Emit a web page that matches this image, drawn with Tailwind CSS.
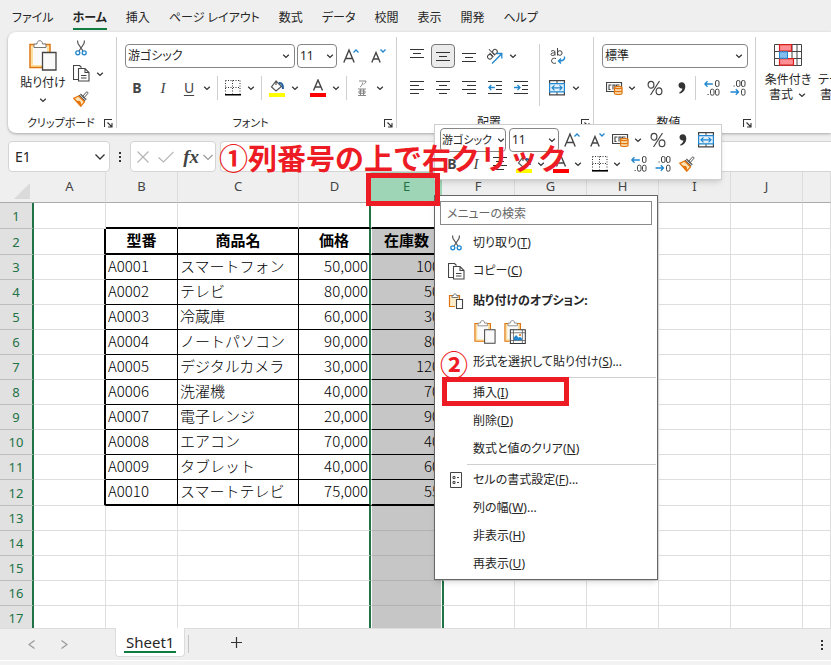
<!DOCTYPE html>
<html lang="ja">
<head>
  <meta charset="UTF-8" />
  <meta name="viewport" content="width=device-width, initial-scale=1.0"/>
  <title>Sheet1 - 列の挿入</title>
  <script src="https://cdn.jsdelivr.net/npm/@tailwindcss/browser@4"></script>
</head>
<body class="relative h-screen overflow-hidden flex flex-col bg-[#efefef] text-[#262626] text-[12px] leading-4 font-['Noto_Sans','Noto_Sans_CJK_JP',sans-serif] [font-feature-settings:'palt']">

  <!-- Icons -->
  <svg class="hidden" fill="none">
    <symbol id="chev" viewBox="0 0 10 10"><path d="M2.2 3.8 5 6.4 7.8 3.8" fill="none" stroke="#333" stroke-width="1.3"/></symbol>
    <symbol id="cut" viewBox="0 0 16 16">
      <path d="M4.5 .5 5 3.5 10 11M11.5 .5 11 3.5 6 11" fill="none" stroke="#555" stroke-width="1.2"/>
      <circle cx="4.8" cy="12.8" r="2" fill="none" stroke="#1f86cf" stroke-width="1.3"/>
      <circle cx="11.2" cy="12.8" r="2" fill="none" stroke="#1f86cf" stroke-width="1.3"/>
    </symbol>
    <symbol id="copy" viewBox="0 0 17 17">
      <path d="M5 14.5H.5V.5h6l2 2" fill="none" stroke="#444" stroke-width="1.1"/>
      <path d="M5.500 3.500h6.500l4 4v8.500H5.500zM12 3.500v4h4M8 10.500h5.500M8 13h5.500" fill="#fff" stroke="#444" stroke-width="1.1"/>
    </symbol>
    <symbol id="brush" viewBox="0 0 16 16">
      <path d="M9.5 5.5 13.2 1.2c1-.9 2.300.4 1.500 1.400L11 6.800z" fill="#fff" stroke="#555"/>
      <path d="M6 4.200 12 10.200M7.400 3 13.300 8.800" fill="none" stroke="#555" stroke-width="1.200"/>
      <path d="M5.500 5 .8 7.300 7.800 15.200 11.500 10.800z" fill="#fbe3b5" stroke="#e8750a" stroke-width="1.300"/>
      <path d="M3.500 10.300 7 10.500 7.800 14.500z" fill="#e8750a" stroke="#e8750a"/>
    </symbol>
    <symbol id="paste" viewBox="0 0 28 31">
      <path d="M1.500 4.500h19v23h-19z" fill="#fbe0a0"/>
      <path d="M4 7h14v18H4z" fill="#fafafa"/>
      <path d="M6 4.500H1V27.500H13M15 4.500h6V12" fill="none" stroke="#e0750f" stroke-width="1.500"/>
      <path d="M5 7.500V4h3C8 1.500 9.500.7 10.800.7S13.500 1.500 13.500 4h3.500v3.500z" fill="#fff" stroke="#777"/>
      <path d="M13.500 12.500h13.500v17.500H13.500z" fill="#fafafa" stroke="#444" stroke-width="1.300"/>
    </symbol>
    <symbol id="paste-sm" viewBox="0 0 16 16">
      <path d="M1.500 2.500h10v11h-10z" fill="#fdeecb"/>
      <path d="M4 2.500H1.500v11H7M9 2.500h2.500V6" fill="none" stroke="#e0750f" stroke-width="1.200"/>
      <path d="M4 4.500v-2h1.500c0-2.200 3-2.200 3 0H10v2z" fill="#fff" stroke="#777"/>
      <path d="M8.500 6.500h6v9h-6z" fill="#fff" stroke="#444" stroke-width="1.100"/>
    </symbol>
    <symbol id="pastepic" viewBox="0 0 28 31">
      <path d="M1.500 4.500h19v23h-19z" fill="#fbe0a0"/>
      <path d="M4 7h14v18H4z" fill="#fafafa"/>
      <path d="M6 4.500H1V27.500H7M15 4.500h6V12" fill="none" stroke="#e0750f" stroke-width="1.500"/>
      <path d="M5 7.500V4h3C8 1.500 9.500.7 10.800.7S13.500 1.500 13.500 4h3.500v3.500z" fill="#fff" stroke="#777"/>
      <path d="M8 12.500h19.300v17.800H8z" fill="#fff" stroke="#333" stroke-width="1.300"/>
      <path d="M8 16.500h19M8 26.500h19M12 12.500v18M23.500 12.500v18" stroke="#555" fill="none"/>
      <path d="M12.500 26v-3.500l3-3 3 3.500 2-1.500 2.500 2.500v2z" fill="#1f86cf"/><circle cx="20.500" cy="19.500" r="1.300" fill="#e0750f"/>
    </symbol>
    <symbol id="borders" viewBox="0 0 16 16">
      <path d="M.5 .5h15M.5 7.500h15M.5 .5v13M7.500 .5v13M15 .5v13" fill="none" stroke="#333" stroke-dasharray="1 1.500"/>
      <path d="M0 14.800h16" stroke="#000" stroke-width="1.600"/>
    </symbol>
    <symbol id="fill" viewBox="0 0 16 18">
      <path d="M7 2 2.500 8 7 12 12.500 7.500zM7 2v4" fill="#fff" stroke="#555" stroke-width="1.200"/>
      <path d="M10 4c3-.5 4 2 4 6" fill="none" stroke="#1f5f9f" stroke-width="2"/>
      <path d="M0 14h16v4H0z" fill="#ff0"/>
    </symbol>
    <symbol id="fontcolor" viewBox="0 0 16 18">
      <path d="M3.500 11.500 8 1l4.500 10.500M5 8h6" fill="none" stroke="#444" stroke-width="1.400"/>
      <path d="M0 14h16v4H0z" fill="#f00"/>
    </symbol>
    <symbol id="bigger" viewBox="0 0 16 16">
      <path d="M.8 14.500 6 2l5.200 12.500M2.600 10.500h6.800" fill="none" stroke="#444" stroke-width="1.400"/>
      <path d="M10.500 4.500 13 2l2.500 2.500" fill="none" stroke="#1f86cf" stroke-width="1.300"/>
    </symbol>
    <symbol id="smaller" viewBox="0 0 16 16">
      <path d="M1.800 14.500 6 4.500l4.200 10M3.300 11h5.400" fill="none" stroke="#444" stroke-width="1.400"/>
      <path d="M10.500 1.500 13 4l2.500-2.500" fill="none" stroke="#1f86cf" stroke-width="1.300"/>
    </symbol>
    <symbol id="lines-center" viewBox="0 0 14 14"><path d="M0 .5h14M3 4.500h8M0 8.500h14M3 12.500h8" stroke="#333"/></symbol>
    <symbol id="merge" viewBox="0 0 16 16">
      <path d="M.6 .6h14.800v14.300H.6z" fill="#fff" stroke="#444" stroke-width="1.200"/>
      <path d="M8 .5v3M8 12v3" stroke="#444"/>
      <path d="M.6 3.600h14.800v8.300H.6z" fill="#e4f1fb" stroke="#1f86cf" stroke-width="1.200"/>
      <path d="M3 7.800h10M5.500 5.300 3 7.800l2.500 2.500M10.500 5.300 13 7.800l-2.500 2.500" fill="none" stroke="#1f86cf" stroke-width="1.200"/>
    </symbol>
    <symbol id="money" viewBox="0 0 17 14">
      <path d="M.5 1.500h15v9H.5z" fill="#fff" stroke="#444" stroke-width="1.200"/>
      <path d="M5.500 4H3v4.500h1.500M7 8.500V4h2v4M10.500 6V4h3" fill="none" stroke="#444" stroke-width="1.100"/>
      <path d="M8.500 6.500c0-1.500 7.500-1.500 7.500 0v6c0 1.300-7.500 1.300-7.500 0z" fill="#fbd9a8" stroke="#e0750f" stroke-width="1.200"/>
      <path d="M8.500 6.800c1 1.200 6.500 1.200 7.500 0M8.500 9.800c1 1.200 6.500 1.200 7.500 0" fill="none" stroke="#e0750f" stroke-width="1.200"/>
    </symbol>
    <symbol id="percent" viewBox="0 0 16 16">
      <path d="M12.500 1 3.500 15" stroke="#444" stroke-width="1.200"/>
      <ellipse cx="4" cy="4.700" rx="2.900" ry="3.400" fill="none" stroke="#444" stroke-width="1.200"/>
      <ellipse cx="12" cy="11.300" rx="2.900" ry="3.400" fill="none" stroke="#444" stroke-width="1.200"/>
    </symbol>
    <symbol id="comma" viewBox="0 0 10 14"><path d="M1.500 4.300C1.500 2.200 3 1.200 4.800 1.200c2.200 0 3.500 1.800 3.500 4.300 0 3.700-2.600 6.300-5.600 7.200l-.5-1.200c1.800-.8 3-2.200 3.200-4C3.500 8 1.500 6.500 1.500 4.300z" fill="#333"/></symbol>
    <symbol id="inc" viewBox="0 0 16 16">
      <path d="M.8 4h8M3.500 1.300.8 4l2.700 2.700" fill="none" stroke="#1f86cf" stroke-width="1.300"/>
      <path d="M3.500 14.500h1.200" stroke="#444" stroke-width="1.200"/>
      <rect x="11.500" y=".5" width="3.500" height="6" rx="1.500" fill="none" stroke="#444"/>
      <rect x="6.500" y="9.200" width="3.500" height="6" rx="1.500" fill="none" stroke="#444"/>
      <rect x="11.500" y="9.200" width="3.500" height="6" rx="1.500" fill="none" stroke="#444"/>
    </symbol>
    <symbol id="dec" viewBox="0 0 16 16">
      <path d="M.5 12h8M5.800 9.300 8.500 12l-2.700 2.700" fill="none" stroke="#1f86cf" stroke-width="1.300"/>
      <path d="M3.500 6h1.200" stroke="#444" stroke-width="1.200"/>
      <rect x="6.500" y=".5" width="3.500" height="6" rx="1.500" fill="none" stroke="#444"/>
      <rect x="11.500" y=".5" width="3.500" height="6" rx="1.500" fill="none" stroke="#444"/>
      <rect x="11.500" y="9.200" width="3.500" height="6" rx="1.500" fill="none" stroke="#444"/>
    </symbol>
    <symbol id="launch" viewBox="0 0 9 9"><path d="M.5 8V.5H8M3.500 3.500l4 4M8 4v4H4" fill="none" stroke="#333" stroke-width="1.100"/></symbol>
    <symbol id="dots" viewBox="0 0 4 12"><path d="M1 1h2v2H1zM1 5h2v2H1zM1 9h2v2H1z" fill="#333"/></symbol>
  </svg>

  <!-- Ribbon tabs -->
  <nav class="h-8 shrink-0 flex items-center gap-[19px] pl-3 pt-1 whitespace-nowrap">
    <a href="#">ファイル</a>
    <a href="#" class="relative font-bold">ホーム<span class="absolute inset-x-0 -bottom-1 h-0.5 bg-[#107c41]"></span></a>
    <a href="#">挿入</a>
    <a href="#">ページ レイアウト</a>
    <a href="#">数式</a>
    <a href="#">データ</a>
    <a href="#">校閲</a>
    <a href="#">表示</a>
    <a href="#">開発</a>
    <a href="#">ヘルプ</a>
  </nav>

  <!-- Ribbon -->
  <div class="ml-2 h-[101px] shrink-0 flex bg-white rounded-l-lg shadow-[0_1px_3px_rgba(0,0,0,0.3)] overflow-hidden whitespace-nowrap">

    <section class="w-[108px] shrink-0 flex flex-col pt-2">
      <div class="flex pl-3">
        <button class="w-[46px] flex flex-col items-center gap-1">
          <svg class="w-7 h-[31px]"><use href="#paste"/></svg>
          <span>貼り付け</span>
          <svg class="w-[10px] h-[10px]"><use href="#chev"/></svg>
        </button>
        <div class="ml-[7px] flex flex-col gap-[9px]">
          <button aria-label="切り取り" class="w-4"><svg class="size-4"><use href="#cut"/></svg></button>
          <button aria-label="コピー" class="flex items-center gap-[5px]"><svg class="size-[17px]"><use href="#copy"/></svg><svg class="w-[10px] h-[10px]"><use href="#chev"/></svg></button>
          <button aria-label="書式のコピー" class="w-4"><svg class="size-4"><use href="#brush"/></svg></button>
        </div>
      </div>
      <div class="mt-auto mb-0.5 pr-[3px] flex items-center justify-between"><span class="pl-[19px] text-[11px]">クリップボード</span><button aria-label="クリップボードの詳細"><svg class="size-[9px]"><use href="#launch"/></svg></button></div>
    </section>
    <div class="w-px shrink-0 my-[5px] bg-[#cfcfcf]"></div>

    <section class="w-[279px] shrink-0 flex flex-col gap-2 pt-3">
      <div class="h-6 pl-2 flex items-center">
        <div class="relative">
          <select aria-label="フォント名" class="appearance-none block w-[170px] h-6 px-0.5 border border-[#868686] rounded bg-white"><option>游ゴシック</option></select>
          <svg class="absolute right-1 top-[7px] w-[10px] h-[10px] pointer-events-none"><use href="#chev"/></svg>
        </div>
        <div class="relative ml-0.5">
          <select aria-label="フォント サイズ" class="appearance-none block w-10 h-6 px-0.5 border border-[#868686] rounded bg-white"><option>11</option></select>
          <svg class="absolute right-0.5 top-[7px] w-[10px] h-[10px] pointer-events-none"><use href="#chev"/></svg>
        </div>
        <button aria-label="拡大" class="ml-1.5"><svg class="size-4"><use href="#bigger"/></svg></button>
        <button aria-label="縮小" class="ml-[11px]"><svg class="size-4"><use href="#smaller"/></svg></button>
      </div>
      <div class="h-6 pl-[7px] flex items-center">
        <button class="w-[26px] text-[14px] font-bold text-[#444]">B</button>
        <button class="w-[26px] text-[15px] italic text-[#444] font-['Liberation_Serif',serif]">I</button>
        <button class="w-[26px] text-[14px] underline underline-offset-2 text-[#444]">U</button>
        <svg class="w-[10px] h-[10px]"><use href="#chev"/></svg>
        <div class="w-px h-6 mx-[5px] bg-[#cfcfcf]"></div>
        <button aria-label="罫線" class="flex items-center gap-[3px]"><svg class="w-5 h-4"><use href="#borders"/></svg><svg class="w-[10px] h-[10px]"><use href="#chev"/></svg></button>
        <div class="w-px h-6 mx-[5px] bg-[#cfcfcf]"></div>
        <button aria-label="塗りつぶしの色" class="flex items-center gap-[3px]"><svg class="w-5 h-[18px]"><use href="#fill"/></svg><svg class="w-[10px] h-[10px]"><use href="#chev"/></svg></button>
        <button aria-label="フォントの色" class="ml-2 flex items-center gap-[3px]"><svg class="w-5 h-[18px]"><use href="#fontcolor"/></svg><svg class="w-[10px] h-[10px]"><use href="#chev"/></svg></button>
        <div class="w-px h-6 mx-[5px] bg-[#cfcfcf]"></div>
        <button aria-label="ふりがな" class="flex items-center gap-[3px]"><svg class="w-5 h-[18px]" viewBox="0 0 20 18"><path d="M7 2h7c0 1.500-1 2.500-2.500 3.200M10.500 3.500c0 2-.8 3.500-2.500 4.500M6 10h8M6 16.500h8M8.500 10v6M11.500 10v6M7 12h6v2.300H7z" fill="none" stroke="#888"/></svg><svg class="w-[10px] h-[10px]"><use href="#chev"/></svg></button>
      </div>
      <div class="mt-auto mb-0.5 pr-[3px] flex items-center"><span class="flex-1 text-center text-[11px]">フォント</span><button aria-label="フォントの詳細"><svg class="size-[9px]"><use href="#launch"/></svg></button></div>
    </section>
    <div class="w-px shrink-0 my-[5px] bg-[#cfcfcf]"></div>

    <section class="w-[196px] shrink-0 flex flex-col pt-3">
      <div class="flex pl-[7px]">
        <div class="w-[135px] flex flex-col gap-2">
          <div class="h-6 flex items-center">
            <button aria-label="上揃え" class="w-[26px] flex justify-center"><svg class="size-[14px]"><path d="M0 .5h14M3 4.500h8M0 8.500h14" stroke="#333"/></svg></button>
            <button aria-label="上下中央揃え" class="w-[24px] h-6 mx-px flex justify-center items-center border border-[#777] rounded bg-[#ebebeb]"><svg class="w-[14px] h-[9px]"><path d="M0 .5h14M3 4.500h8M0 8.500h14" stroke="#333"/></svg></button>
            <button aria-label="下揃え" class="w-[26px] flex justify-center"><svg class="size-[14px]"><path d="M0 4.500h14M3 8.500h8M0 12.500h14" stroke="#333"/></svg></button>
            <button aria-label="方向" class="flex items-center gap-1 pl-1">
              <svg class="size-[18px]" viewBox="0 0 18 18">
                <g fill="none" stroke="#444" transform="rotate(-45 6 7)"><circle cx="2.500" cy="7.500" r="2.300"/><path d="M5 4.500v5.500M7.200 1.500V10"/><circle cx="9.700" cy="7.500" r="2.300"/></g>
                <path d="M6 16.500 15.500 7M10.800 6.500h5v5" fill="none" stroke="#1f86cf" stroke-width="1.300"/>
              </svg>
              <svg class="w-[10px] h-[10px]"><use href="#chev"/></svg>
            </button>
          </div>
          <div class="h-6 flex items-center">
            <button aria-label="左揃え" class="w-[26px] flex justify-center"><svg class="size-[14px]"><path d="M0 .5h14M0 4.500h9M0 8.500h14M0 12.500h9" stroke="#333"/></svg></button>
            <button aria-label="中央揃え" class="w-[26px] flex justify-center"><svg class="size-[14px]"><use href="#lines-center"/></svg></button>
            <button aria-label="右揃え" class="w-[26px] flex justify-center"><svg class="size-[14px]"><path d="M0 .5h14M5 4.500h9M0 8.500h14M5 12.500h9" stroke="#333"/></svg></button>
            <button aria-label="インデントを減らす" class="w-[26px] flex justify-center"><svg class="size-[14px]"><path d="M0 .5h14M8 4.500h6M8 8.500h6M0 12.500h14" stroke="#333"/><path d="M.8 6.500h6M3.300 4 .8 6.500 3.300 9" fill="none" stroke="#1f86cf" stroke-width="1.300"/></svg></button>
            <button aria-label="インデントを増やす" class="w-[26px] flex justify-center"><svg class="size-[14px]"><path d="M0 .5h14M8 4.500h6M8 8.500h6M0 12.500h14" stroke="#333"/><path d="M0 6.500h6M3.500 4 6 6.500 3.500 9" fill="none" stroke="#1f86cf" stroke-width="1.300"/></svg></button>
          </div>
        </div>
        <div class="w-px h-[62px] bg-[#cfcfcf]"></div>
        <div class="pl-[9px] flex flex-col gap-2">
          <button aria-label="折り返して全体を表示する" class="h-6 flex items-center">
            <svg class="w-[18px] h-[18px]" viewBox="0 0 18 18">
              <path d="M2 4.300c1-1 4-1.200 4 .7V8.500M6 5.800c-2 0-4 .2-4 1.500 0 1.800 3 1.500 4 0M8.500 1v7.500M7 16c-1.500.9-4.500.3-4.500-2.200S5.500 10.700 7 11.600" fill="none" stroke="#444"/>
              <circle cx="10.800" cy="6" r="2.300" fill="none" stroke="#444"/>
              <path d="M15.500 9.500c.5 3-1 4.500-6 4.500M12 11.500 9.500 14l2.500 2.500" fill="none" stroke="#1f86cf" stroke-width="1.400"/>
            </svg>
          </button>
          <button aria-label="セルを結合して中央揃え" class="h-6 flex items-center gap-1.5"><svg class="size-4"><use href="#merge"/></svg><svg class="w-[10px] h-[10px]"><use href="#chev"/></svg></button>
        </div>
      </div>
      <div class="mt-auto mb-0.5 pr-[3px] flex items-center"><span class="flex-1 text-center">配置</span><button aria-label="配置の詳細"><svg class="size-[9px]"><use href="#launch"/></svg></button></div>
    </section>
    <div class="w-px shrink-0 my-[5px] bg-[#cfcfcf]"></div>

    <section class="w-[161px] shrink-0 flex flex-col gap-2 pt-3">
      <div class="relative ml-2 w-[146px]">
        <select aria-label="表示形式" class="appearance-none block w-full h-6 px-0.5 border border-[#868686] rounded bg-white"><option>標準</option></select>
        <svg class="absolute right-1 top-[7px] w-[10px] h-[10px] pointer-events-none"><use href="#chev"/></svg>
      </div>
      <div class="h-6 pl-3 flex items-center">
        <button aria-label="通貨表示形式" class="flex items-center gap-1"><svg class="w-[17px] h-[14px]"><use href="#money"/></svg><svg class="w-[10px] h-[10px]"><use href="#chev"/></svg></button>
        <button aria-label="パーセント" class="ml-2.5"><svg class="size-4"><use href="#percent"/></svg></button>
        <button aria-label="桁区切り" class="ml-3.5"><svg class="w-[10px] h-[14px]"><use href="#comma"/></svg></button>
        <div class="w-px h-6 mx-2 bg-[#cfcfcf]"></div>
        <button aria-label="小数点以下の桁数を増やす"><svg class="size-4"><use href="#inc"/></svg></button>
        <button aria-label="小数点以下の桁数を減らす" class="ml-2.5"><svg class="size-4"><use href="#dec"/></svg></button>
      </div>
      <div class="mt-auto mb-0.5 pr-[3px] flex items-center"><span class="flex-1 text-center">数値</span><button aria-label="数値の詳細"><svg class="size-[9px]"><use href="#launch"/></svg></button></div>
    </section>
    <div class="w-px shrink-0 my-[5px] bg-[#cfcfcf]"></div>

    <section class="shrink-0 flex items-start gap-1.5 pt-3 pl-2">
      <button class="flex flex-col items-center w-12">
        <svg class="w-7 h-[22px] mb-1.5" viewBox="0 0 28 22">
          <path d="M.5 .5h27v21H.5zM5.500 .5v21M18 .5v21M23 .5v21M.5 7.500h27M.5 14.500h27" fill="#fff" stroke="#444"/>
          <path d="M5.500 .7h12v6.500h-12zM5.500 14.700h14v6.500h-14z" fill="#ff8f93" stroke="#d6201f" stroke-width="1.200"/>
          <path d="M5.500 7.800h8v6.500h-8z" fill="#83beec" stroke="#1f86cf"/>
        </svg>
        <span class="leading-[15px]">条件付き</span>
        <span class="leading-[15px] flex items-center gap-1">書式<svg class="w-[10px] h-[10px]"><use href="#chev"/></svg></span>
      </button>
      <button class="flex flex-col items-center pt-7 leading-[15px]"><span>テーブルとして</span><span class="self-start pl-0.5">書式設定</span></button>
    </section>
  </div>

  <!-- Formula bar -->
  <div class="mt-2 h-[31px] shrink-0 flex items-stretch pl-2">
    <div class="relative">
      <input aria-label="名前ボックス" value="E1" class="w-[102px] h-full pl-1.5 text-[14px] bg-white border border-[#d4d4d4] rounded" />
      <svg class="absolute right-1 top-2.5 size-3 pointer-events-none" viewBox="0 0 12 12"><path d="M1.500 3.500 6 8l4.500-4.500" fill="none" stroke="#333" stroke-width="1.300"/></svg>
    </div>
    <svg class="w-1 h-3 mx-2 self-center"><use href="#dots"/></svg>
    <div class="w-[86px] flex items-center justify-between pl-1.5 pr-0.5 bg-white border border-[#d4d4d4] rounded">
      <button aria-label="キャンセル"><svg class="size-3"><path d="M.5 .5 11.500 11.500M11.500 .5.5 11.500" stroke="#b5b5b5" stroke-width="1.200"/></svg></button>
      <button aria-label="入力"><svg class="w-4 h-3"><path d="M.5 6.500 5.500 11 15.500 .8" fill="none" stroke="#b5b5b5" stroke-width="1.200"/></svg></button>
      <button class="flex items-center gap-1 text-[19px] italic font-bold text-[#444] font-['Liberation_Serif',serif]">fx<svg class="size-[10px]" viewBox="0 0 10 10"><path d="M.5 3 5 7.500 9.500 3" fill="none" stroke="#999" stroke-width="1.200"/></svg></button>
    </div>
    <input aria-label="数式バー" class="ml-1 flex-1 min-w-0 bg-white border border-r-0 border-[#d4d4d4] rounded-l" />
  </div>

  <!-- Worksheet -->
  <main class="flex-1 min-h-0 overflow-hidden bg-white">
    <table class="w-full table-fixed border-separate border-spacing-0 text-[15px] leading-5 [font-feature-settings:normal] font-['Noto_Sans_CJK_JP',sans-serif]">
      <colgroup>
        <col class="w-[34px]" /><col class="w-[72px]" /><col class="w-[72px]" /><col class="w-[121px]" /><col class="w-[72px]" /><col class="w-[71px]" /><col class="w-[73px]" /><col class="w-[72px]" /><col class="w-[72px]" /><col class="w-[72px]" /><col class="w-[72px]" /><col />
      </colgroup>
      <thead id="sheetHead" class="text-[13px] text-[#444] bg-[#efefef] font-['Noto_Sans',sans-serif]"></thead>
      <tbody id="sheetBody"></tbody>
    </table>
  </main>

  <!-- Sheet tabs -->
  <footer class="shrink-0">
    <div class="h-8 flex border-t border-[#dcdcdc]">
      <div class="w-[115px] flex items-center gap-6 pl-7">
        <button aria-label="前のシート"><svg class="w-2 h-[9px]"><path d="M6.500 .5 1 4.500l5.500 4" fill="none" stroke="#999" stroke-width="1.200"/></svg></button>
        <button aria-label="次のシート"><svg class="w-2 h-[9px]"><path d="M1.500 .5 7 4.500l-5.500 4" fill="none" stroke="#999" stroke-width="1.200"/></svg></button>
      </div>
      <a href="#" class="-mt-px h-[29px] px-2 pt-1.5 bg-white border border-t-0 border-[#dcdcdc] rounded-b text-[15px]"><span class="block h-[19px] leading-4 border-b-2 border-[#107c41] px-0.5">Sheet1</span></a>
      <div class="w-px h-[18px] mt-1.5 ml-[3px] bg-[#c4c4c4]"></div>
      <button aria-label="新しいシート" class="ml-[42px] mb-1"><svg class="size-[11px]"><path d="M5.500 0v11M0 5.500h11" stroke="#333" stroke-width="1.200"/></svg></button>
      <svg class="w-1 h-3 ml-auto mr-[7px] mt-2.5"><use href="#dots"/></svg>
    </div>
    <div class="h-[5px] border-t border-white bg-[#f3f3f3]"></div>
  </footer>

  <!-- Mini toolbar -->
  <div class="absolute left-[434px] top-[124px] w-[288px] h-[56px] pl-[5px] pt-[3px] bg-white border border-[#cfcfcf] shadow-md">
    <div class="h-6 flex items-center">
      <div class="relative">
        <select aria-label="フォント名" class="appearance-none block w-[66px] h-6 px-px text-[11px] border border-[#868686] rounded bg-white"><option>游ゴシック</option></select>
        <svg class="absolute right-0 top-[7px] w-[10px] h-[10px] pointer-events-none"><use href="#chev"/></svg>
      </div>
      <div class="relative ml-[3px]">
        <select aria-label="フォント サイズ" class="appearance-none block w-[50px] h-6 px-0.5 border border-[#868686] rounded bg-white"><option>11</option></select>
        <svg class="absolute right-0.5 top-[7px] w-[10px] h-[10px] pointer-events-none"><use href="#chev"/></svg>
      </div>
      <button aria-label="拡大" class="w-[26px] flex justify-center"><svg class="size-4"><use href="#bigger"/></svg></button>
      <button aria-label="縮小" class="w-[24px] flex justify-center"><svg class="size-4"><use href="#smaller"/></svg></button>
      <button aria-label="通貨表示形式" class="w-[36px] flex items-center justify-center gap-1"><svg class="w-[17px] h-[14px]"><use href="#money"/></svg><svg class="w-[10px] h-[10px]"><use href="#chev"/></svg></button>
      <button aria-label="パーセント" class="w-[26px] flex justify-center"><svg class="size-4"><use href="#percent"/></svg></button>
      <button aria-label="桁区切り" class="w-[24px] flex justify-center"><svg class="w-[10px] h-[14px]"><use href="#comma"/></svg></button>
      <button aria-label="セルを結合" class="w-[22px] flex justify-center"><svg class="size-4"><use href="#merge"/></svg></button>
    </div>
    <div class="h-6 flex items-center">
      <button class="w-[24px] text-[14px] font-bold text-[#444]">B</button>
      <button class="w-[24px] text-[15px] italic text-[#444] font-['Liberation_Serif',serif]">I</button>
      <button aria-label="中央揃え" class="w-[24px] flex justify-center"><svg class="size-[14px]"><use href="#lines-center"/></svg></button>
      <button aria-label="塗りつぶしの色" class="flex items-center"><svg class="w-[24px] h-[18px]"><use href="#fill"/></svg><svg class="w-[10px] h-[10px]"><use href="#chev"/></svg></button>
      <button aria-label="フォントの色" class="ml-[3px] flex items-center"><svg class="w-[24px] h-[18px]"><use href="#fontcolor"/></svg><svg class="w-[10px] h-[10px]"><use href="#chev"/></svg></button>
      <button aria-label="罫線" class="ml-[5px] flex items-center"><svg class="w-[24px] h-4"><use href="#borders"/></svg><svg class="w-[10px] h-[10px]"><use href="#chev"/></svg></button>
      <button aria-label="小数点以下の桁数を増やす" class="ml-[5px]"><svg class="w-[24px] h-4"><use href="#inc"/></svg></button>
      <button aria-label="小数点以下の桁数を減らす"><svg class="w-[24px] h-4"><use href="#dec"/></svg></button>
      <button aria-label="書式のコピー"><svg class="w-[24px] h-4"><use href="#brush"/></svg></button>
    </div>
  </div>

  <!-- Context menu -->
  <div class="absolute left-[434px] top-[195px] w-[224px] flex flex-col pt-[5px] pb-px bg-white border border-[#666] shadow-md whitespace-nowrap">
    <input type="text" aria-label="メニューの検索" placeholder="メニューの検索" class="mx-[5px] mb-1 h-6 px-1.5 border border-[#8a8a8a] placeholder:text-[#666]" />
    <button class="h-7 pl-[13px] flex items-center gap-[9px]"><svg class="size-4"><use href="#cut"/></svg><span>切り取り(<u>T</u>)</span></button>
    <button class="h-7 pl-[13px] flex items-center gap-2"><svg class="size-[17px]"><use href="#copy"/></svg><span>コピー(<u>C</u>)</span></button>
    <div class="h-[31px] pl-[13px] flex items-center gap-[9px] font-bold"><svg class="size-4"><use href="#paste-sm"/></svg><span>貼り付けのオプション:</span></div>
    <div class="h-8 pl-[39px] flex items-center gap-2">
      <button aria-label="貼り付け"><svg class="w-[22px] h-6"><use href="#paste"/></svg></button>
      <button aria-label="図として貼り付け"><svg class="w-[22px] h-6"><use href="#pastepic"/></svg></button>
    </div>
    <button class="h-7 pl-[38px] text-left">形式を選択して貼り付け(<u>S</u>)...</button>
    <div class="h-px my-px ml-8 mr-px bg-[#d0d0d0]"></div>
    <button class="h-7 pl-[38px] text-left">挿入(<u>I</u>)</button>
    <button class="h-7 pl-[38px] text-left">削除(<u>D</u>)</button>
    <button class="h-7 pl-[38px] text-left">数式と値のクリア(<u>N</u>)</button>
    <div class="h-px my-px ml-8 mr-px bg-[#d0d0d0]"></div>
    <button class="h-7 pl-[13px] flex items-center gap-[9px]"><svg class="size-4"><path d="M2.500 .5h11v15h-11zM5 4.500h2v2H5zM5 9.500h2v2H5zM9 5.500h2M9 10.500h2" fill="none" stroke="#444"/></svg><span>セルの書式設定(<u>F</u>)...</span></button>
    <button class="h-7 pl-[38px] text-left">列の幅(<u>W</u>)...</button>
    <button class="h-7 pl-[38px] text-left">非表示(<u>H</u>)</button>
    <button class="h-7 pl-[38px] text-left">再表示(<u>U</u>)</button>
  </div>

  <!-- Step markers -->
  <p class="absolute left-[219px] top-[137px] text-[29px] leading-10 font-bold text-[#ed1c24] whitespace-nowrap pointer-events-none [font-feature-settings:normal] font-['Noto_Sans_CJK_JP',sans-serif]">①列番号の上で右クリック</p>
  <div class="absolute left-[366px] top-[173px] w-[74px] h-[33px] border-[5px] border-[#ed1c24] pointer-events-none"></div>
  <p class="absolute left-[440px] top-[344px] text-[28px] leading-10 font-bold text-[#ed1c24] pointer-events-none font-['Noto_Sans_CJK_JP',sans-serif]">②</p>
  <div class="absolute left-[442px] top-[377px] w-[127px] h-[29px] border-[5px] border-[#ed1c24] pointer-events-none"></div>

  <script>
    const columns = ['A', 'B', 'C', 'D', 'E', 'F', 'G', 'H', 'I', 'J', ''];
    const products = [
      ['型番', '商品名', '価格', '在庫数'],
      ['A0001', 'スマートフォン', '50,000', '100'],
      ['A0002', 'テレビ', '80,000', '50'],
      ['A0003', '冷蔵庫', '60,000', '30'],
      ['A0004', 'ノートパソコン', '90,000', '80'],
      ['A0005', 'デジタルカメラ', '30,000', '120'],
      ['A0006', '洗濯機', '40,000', '70'],
      ['A0007', '電子レンジ', '20,000', '90'],
      ['A0008', 'エアコン', '70,000', '40'],
      ['A0009', 'タブレット', '40,000', '60'],
      ['A0010', 'スマートテレビ', '75,000', '55'],
    ];

    let head = '<tr class="h-[31px]"><th class="p-0 border-b border-[#ababab] align-bottom"><svg class="ml-[14px] mb-[3px] size-4"><path d="M16 0v16H0z" fill="#dadada"/></svg></th>';
    columns.forEach(c => {
      head += c === 'E'
        ? '<th class="h-[31px] p-0 pb-0.5 font-normal text-[#217346] bg-[#9fd5b7] border-b border-[#ababab]">E</th>'
        : '<th class="h-[31px] p-0 pb-0.5 font-normal border-b border-b-[#ababab] border-r border-r-[#dcdcdc]">' + c + '</th>';
    });
    document.getElementById('sheetHead').innerHTML = head + '</tr>';

    let body = '';
    for (let r = 1; r <= 17; r++) {
      const tall = r === 1 || r === 2 || r === 12;
      const inTable = r >= 2 && r <= 12;
      body += tall ? '<tr class="h-[26px]">' : '<tr class="h-[25px]">';
      body += '<th class="p-0 text-[13px] font-normal text-[#217346] bg-[#e1e1e1] border-b border-b-[#bdbdbd] border-r-2 border-r-[#217346] font-[\'Noto_Sans\',sans-serif]">' + r + '</th>';
      columns.forEach((c, i) => {
        const isData = i >= 1 && i <= 4;
        let cls = 'p-0 pb-0.5 whitespace-nowrap ';
        // bottom edge
        if (isData && tall) cls += 'border-b-2 border-b-black ';
        else if (isData && inTable) cls += 'border-b border-b-black ';
        else if (c === 'E' && r > 1) cls += 'border-b border-b-[#b2b2b2] ';
        else cls += 'border-b border-b-[#dedede] ';
        // side edges
        if (c === 'A' && inTable) cls += 'border-r-2 border-r-black ';
        else if (c === 'D') cls += 'border-r-2 border-r-[#217346] ';
        else if (c === 'E') cls += 'border-x border-x-white ';
        else if (isData && inTable) cls += 'border-r border-r-black ';
        else cls += 'border-r border-r-[#dedede] ';
        if (c === 'F') cls += 'border-l-2 border-l-[#217346] ';
        if (c === 'E' && r > 1) cls += 'bg-[#c6c6c6] ';
        // text
        if (r === 2) cls += 'text-center font-bold text-black ';
        else if (i >= 3) cls += 'text-right pr-px font-light text-black ';
        else cls += 'pl-0.5 text-left font-light text-black ';
        const text = isData && inTable ? products[r - 2][i - 1] : '';
        body += '<td class="' + cls + '">' + text + '</td>';
      });
      body += '</tr>';
    }
    document.getElementById('sheetBody').innerHTML = body;
  </script>
</body>
</html>
